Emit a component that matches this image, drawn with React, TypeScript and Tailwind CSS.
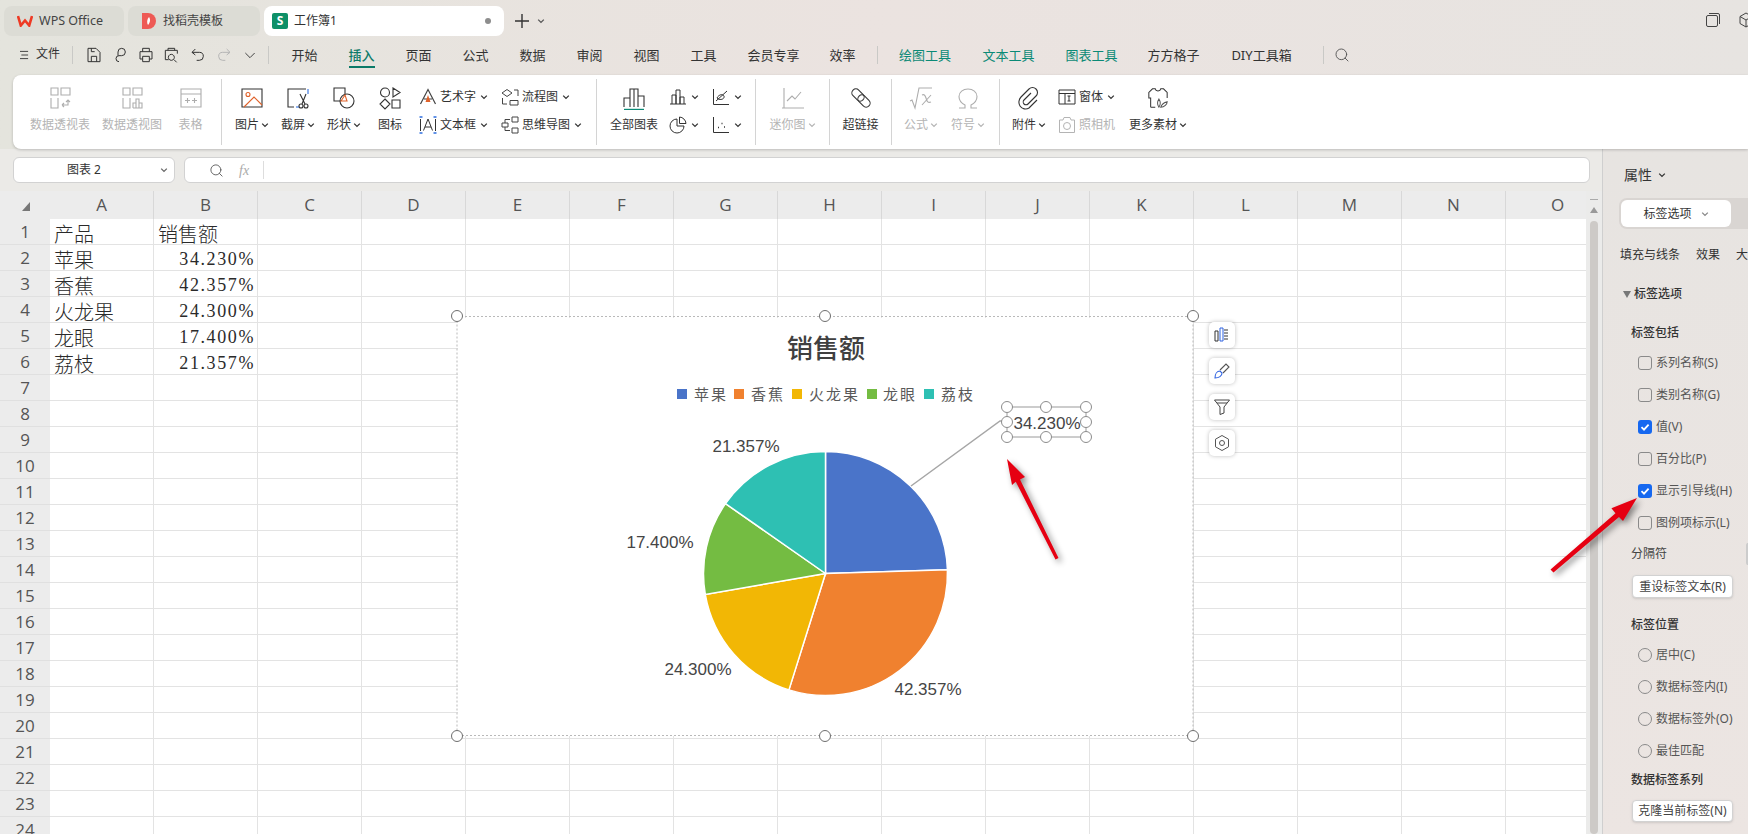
import type { ReactNode } from "react";
import { Search } from "lucide-react";

const COLUMNS = ["A", "B", "C", "D", "E", "F", "G", "H", "I", "J", "K", "L", "M", "N", "O"];
const ROWS = Array.from({ length: 24 }, (_, i) => i + 1);

const CELLS: Record<number, [string, string]> = {
  1: ["产品", "销售额"],
  2: ["苹果", "34.230%"],
  3: ["香蕉", "42.357%"],
  4: ["火龙果", "24.300%"],
  5: ["龙眼", "17.400%"],
  6: ["荔枝", "21.357%"],
};

const SLICES = [
  { value: 34.23, color: "#4a74c9" },
  { value: 42.357, color: "#f0812f" },
  { value: 24.3, color: "#f2b705" },
  { value: 17.4, color: "#74bc42" },
  { value: 21.357, color: "#2ec0b3" },
];

const LEGEND = [
  { x: 677, tx: 694, label: "苹果", color: "#4a74c9" },
  { x: 734, tx: 751, label: "香蕉", color: "#f0812f" },
  { x: 792, tx: 809, label: "火龙果", color: "#f2b705" },
  { x: 867, tx: 883, label: "龙眼", color: "#74bc42" },
  { x: 924, tx: 941, label: "荔枝", color: "#2ec0b3" },
];

const HANDLES = [
  [457, 316], [825, 316], [1193, 316],
  [457, 736], [825, 736], [1193, 736],
];

const LABEL_HANDLES = [
  [1007, 407], [1046, 407], [1086, 407],
  [1007, 422], [1086, 422],
  [1007, 437], [1046, 437], [1086, 437],
];

const MENU = [
  { label: "开始", w: "w-[57px]" },
  { label: "插入", w: "w-[57px]", active: true },
  { label: "页面", w: "w-[57px]" },
  { label: "公式", w: "w-[57px]" },
  { label: "数据", w: "w-[57px]" },
  { label: "审阅", w: "w-[57px]" },
  { label: "视图", w: "w-[57px]" },
  { label: "工具", w: "w-[57px]" },
  { label: "会员专享", w: "w-[83px]" },
  { label: "效率", w: "w-[55px]" },
];

const MENU_TOOLS = [
  { label: "绘图工具", w: "w-[84px]", teal: true },
  { label: "文本工具", w: "w-[83px]", teal: true },
  { label: "图表工具", w: "w-[83px]", teal: true },
  { label: "方方格子", w: "w-[81px]" },
  { label: "DIY工具箱", w: "w-[95px]" },
];

function slicePath(start: number, end: number) {
  const cx = 825.5;
  const cy = 573.5;
  const r = 122;
  const a0 = (start / 100) * Math.PI * 2;
  const a1 = (end / 100) * Math.PI * 2;
  const x0 = cx + r * Math.sin(a0);
  const y0 = cy - r * Math.cos(a0);
  const x1 = cx + r * Math.sin(a1);
  const y1 = cy - r * Math.cos(a1);
  const large = end - start > 50 ? 1 : 0;
  return `M${cx} ${cy}L${x0} ${y0}A${r} ${r} 0 ${large} 1 ${x1} ${y1}Z`;
}

function Icon({ children, color = "#333", size = "w-6 h-6" }: { children: ReactNode; color?: string; size?: string }) {
  return (
    <svg viewBox="0 0 24 24" className={`${size} shrink-0`} fill="none" stroke={color} strokeWidth={1.1}>
      {children}
    </svg>
  );
}

function Chev({ color = "#333" }: { color?: string }) {
  return (
    <svg viewBox="0 0 8 8" className="w-2 h-2 shrink-0" fill="none" stroke={color} strokeWidth={1.3}>
      <path d="M1.2 2.6 4 5.4 6.8 2.6" />
    </svg>
  );
}

function Big({ w, label, icon, chev, off }: { w: string; label: string; icon: ReactNode; chev?: boolean; off?: boolean }) {
  return (
    <div className={`${w} shrink-0 flex flex-col items-center pt-[11px] gap-[7px]`}>
      <div className="h-6 flex items-center justify-center">{icon}</div>
      <div className={`flex items-center gap-[2px] text-xs leading-4 whitespace-nowrap ${off ? "text-[#b4b4b4]" : "text-[#333]"}`}>
        {label}
        {chev && <Chev color={off ? "#b4b4b4" : "#333"} />}
      </div>
    </div>
  );
}

function Small({ label, icon, off, chev = true }: { label?: string; icon: ReactNode; off?: boolean; chev?: boolean }) {
  return (
    <div className={`flex items-center h-6 text-xs whitespace-nowrap ${off ? "text-[#b4b4b4]" : "text-[#333]"}`}>
      <div className="w-[18px] flex justify-center">{icon}</div>
      {label && <span className="ml-[3px]">{label}</span>}
      {chev && (
        <span className="ml-1">
          <Chev />
        </span>
      )}
    </div>
  );
}

function Stack({ w, children }: { w: string; children: ReactNode }) {
  return <div className={`${w} shrink-0 flex flex-col gap-1 pt-[10px]`}>{children}</div>;
}

function Sep() {
  return <div className="w-px h-[66px] mt-1 shrink-0 bg-[#d4d4d4]" />;
}

function Check({ label, checked }: { label: string; checked?: boolean }) {
  return (
    <div className="h-8 ml-[35px] flex items-center gap-1 text-xs text-[#555] whitespace-nowrap">
      {checked ? (
        <span className="w-[14px] h-[14px] rounded-[3px] bg-[#1668f0] flex items-center justify-center">
          <svg viewBox="0 0 12 12" className="w-3 h-3" fill="none" stroke="#fff" strokeWidth={1.8}>
            <path d="M2.5 6.2 5 8.6 9.6 3.6" />
          </svg>
        </span>
      ) : (
        <span className="w-[14px] h-[14px] rounded-[3px] border border-[#8a8a8a]" />
      )}
      {label}
    </div>
  );
}

function Radio({ label }: { label: string }) {
  return (
    <div className="h-8 ml-[35px] flex items-center gap-1 text-xs text-[#555] whitespace-nowrap">
      <span className="w-[14px] h-[14px] rounded-full border border-[#8a8a8a]" />
      {label}
    </div>
  );
}

function PanelButton({ label, h, mt }: { label: string; h: string; mt: string }) {
  return (
    <div className={`${h} ${mt} ml-[29px] w-[101px] rounded-[4px] bg-white border border-[#d2d2d2] shadow-sm flex items-center justify-center text-xs text-[#444] whitespace-nowrap`}>
      {label}
    </div>
  );
}

function SideButton({ children }: { children: ReactNode }) {
  return (
    <div className="w-[26px] h-[26px] rounded-[5px] bg-white shadow-[0_0_4px_rgba(0,0,0,0.25)] flex items-center justify-center">
      {children}
    </div>
  );
}

function Chart() {
  const total = SLICES.reduce((sum, s) => sum + s.value, 0);
  let acc = 0;
  return (
    <div className="absolute left-[458px] top-[318px] w-[735px] h-[418px] bg-white">
      <svg viewBox="458 318 735 418" className="absolute inset-0 w-full h-full overflow-visible">
        <rect x="457" y="316.5" width="736" height="419" fill="none" stroke="#b9b9b9" strokeDasharray="2 2" />
        <text x="826" y="358" textAnchor="middle" fontSize="26" fontWeight="500" fill="#404040">销售额</text>
        {LEGEND.map((l) => (
          <g key={l.label}>
            <rect x={l.x} y="389" width="10" height="10" fill={l.color} />
            <text x={l.tx} y="400" fontSize="15" letterSpacing="2" fill="#595959">{l.label}</text>
          </g>
        ))}
        {SLICES.map((s) => {
          const start = acc;
          acc += (s.value / total) * 100;
          return <path key={s.color} d={slicePath(start, acc)} fill={s.color} stroke="#fff" strokeWidth={1.5} />;
        })}
        <path d="M911 486 1000 421H1007" stroke="#a6a6a6" strokeWidth={1.5} fill="none" />
        <g fontFamily="'Liberation Sans', sans-serif" fontSize="17" fill="#454545" textAnchor="middle">
          <text x="746" y="452">21.357%</text>
          <text x="660" y="548">17.400%</text>
          <text x="698" y="675">24.300%</text>
          <text x="928" y="695">42.357%</text>
          <text x="1047" y="429">34.230%</text>
        </g>
        <rect x="1007" y="407" width="79" height="30" fill="none" stroke="#9a9a9a" />
        {LABEL_HANDLES.map(([x, y]) => (
          <circle key={`${x}-${y}`} cx={x} cy={y} r="5.5" fill="#fff" stroke="#8c8c8c" strokeWidth={1} />
        ))}
        {HANDLES.map(([x, y]) => (
          <circle key={`${x}-${y}`} cx={x} cy={y} r="5.5" fill="#fff" stroke="#6e6e6e" strokeWidth={1} />
        ))}
      </svg>
    </div>
  );
}

export default function App() {
  return (
    <div className="relative w-[1748px] h-[834px] overflow-hidden font-['Noto_Sans','Noto_Sans_CJK_SC',sans-serif] bg-linear-to-r from-[#e4e4dd] via-[#ebe3e0] to-[#e7e4e1] text-[#333]">
      {/* tab bar */}
      <div className="h-[42px] pt-[6px] pl-1 flex items-start gap-1">
        <div className="w-[120px] shrink-0 h-[30px] rounded-lg bg-[#dcdcd5] flex items-center pl-[13px] gap-[6px] text-[12.5px] text-[#444]">
          <svg viewBox="0 0 16 12" className="w-4 h-3">
            <path d="M1 1 3.800 10.500 8 5.500 12.200 10.500 15 1" fill="none" stroke="#ee3a24" strokeWidth={2.6} />
          </svg>
          WPS Office
        </div>
        <div className="w-[132px] shrink-0 h-[30px] rounded-lg bg-[#dcdcd5] flex items-center pl-[14px] gap-[7px] text-xs text-[#444]">
          <svg viewBox="0 0 14 16" className="w-[14px] h-4">
            <path d="M0 0H6A8 8 0 0 1 6 16H0Z" fill="#ee5a55" />
            <path d="M7 4C8.500 6 8.500 9 6 12 4.500 10 5 6 7 4Z" fill="#fff" />
          </svg>
          找稻壳模板
        </div>
        <div className="w-[240px] shrink-0 h-[30px] rounded-lg bg-white flex items-center pl-2 text-xs text-[#333]">
          <span className="w-4 h-4 rounded-[2px] bg-[#0e9068] flex items-center justify-center text-white text-xs font-bold">S</span>
          <span className="ml-[6px]">工作簿1</span>
          <span className="ml-auto mr-[13px] w-[6px] h-[6px] rounded-full bg-[#8d8d8d]" />
        </div>
        <svg viewBox="0 0 16 16" className="w-4 h-4 shrink-0 ml-[6px] mt-[7px]" fill="none" stroke="#333" strokeWidth={1.4}>
          <path d="M8 1V15M1 8H15" />
        </svg>
        <span className="shrink-0 mt-[11px] ml-[3px]">
          <Chev color="#555" />
        </span>
        <svg viewBox="0 0 16 16" className="w-4 h-4 shrink-0 ml-[1156px] mt-[6px]" fill="none" stroke="#444" strokeWidth={1}>
          <rect x="1.5" y="3.5" width="11" height="11" rx="1.5" />
          <path d="M4 1.5H13A1.5 1.5 0 0 1 14.5 3V12" />
        </svg>
        <svg viewBox="0 0 16 16" className="w-4 h-4 shrink-0 ml-[13px] mt-[6px]" fill="none" stroke="#444" strokeWidth={1}>
          <path d="M8 1 14 4.500V11.500L8 15 2 11.500V4.500ZM2 4.500 8 8 14 4.500M8 8V15" />
        </svg>
      </div>

      {/* menu row */}
      <div className="h-[33px] flex items-start pt-[3px] text-[13px] leading-5 text-[#333] whitespace-nowrap">
        <svg viewBox="0 0 10 10" className="ml-5 mt-[5px] w-[9px] h-[10px]" fill="none" stroke="#333" strokeWidth={1}>
          <path d="M0 1H9M1.500 5H9M0 9H9" />
        </svg>
        <span className="ml-[7px] mt-[1px] text-xs">文件</span>
        <div className="ml-3 mt-[1px] w-px h-[18px] bg-[#c9c9c6]" />
        <div className="ml-[13px] flex items-center gap-[10px] h-5">
          <Icon size="w-4 h-4">
            <path d="M3 2H15L21 8V22H3ZM8 22V14H16V22M8 2V7H13" strokeWidth={1.5} />
          </Icon>
          <Icon size="w-4 h-4">
            <path d="M9 13V7.500A5.500 5.500 0 1 1 14.500 13H10.500A4.500 4.500 0 1 0 10.500 22" strokeWidth={1.5} />
          </Icon>
          <Icon size="w-4 h-4">
            <path d="M7 7V2H17V7M7 18H3V7H21V18H17M7 14H17V22H7Z" strokeWidth={1.5} />
          </Icon>
          <Icon size="w-4 h-4">
            <path d="M6 5V2H16V5M7 19H2V5H20V10M11 11A4.500 4.500 0 1 0 11.010 11M15 19 19 23" strokeWidth={1.5} />
          </Icon>
          <Icon size="w-4 h-4">
            <path d="M8 3 3 8 8 12M3 8H14A6 6 0 0 1 14 20H10" strokeWidth={1.5} />
          </Icon>
          <Icon size="w-4 h-4" color="#b5b5b5">
            <path d="M16 3 21 8 16 12M21 8H10A6 6 0 0 0 10 20H14" strokeWidth={1.5} />
          </Icon>
          <Icon size="w-4 h-4" color="#444">
            <path d="M5 9 12 16 19 9" strokeWidth={1.5} />
          </Icon>
        </div>
        <div className="ml-[10px] mt-[1px] w-px h-[18px] bg-[#c9c9c6]" />
        <div className="ml-[7px] flex">
          {MENU.map((m) => (
            <div key={m.label} className={`${m.w} flex justify-center`}>
              <span className={m.active ? "text-[#0b7a68] font-medium border-b-2 border-[#0b7a68] pb-[1px] h-[23px]" : ""}>{m.label}</span>
            </div>
          ))}
        </div>
        <div className="ml-[7px] mt-[1px] w-px h-[18px] bg-[#c9c9c6]" />
        <div className="ml-[5px] flex">
          {MENU_TOOLS.map((m) => (
            <div key={m.label} className={`${m.w} flex justify-center ${m.teal ? "text-[#0b8a76]" : ""}`}>
              {m.label}
            </div>
          ))}
        </div>
        <div className="ml-[14px] mt-[1px] w-px h-[18px] bg-[#c9c9c6]" />
        <Search className="ml-[10px] mt-[2px] w-4 h-4 text-[#555]" strokeWidth={1.4} />
      </div>

      {/* ribbon */}
      <div className="relative z-10 ml-[13px] h-[74px] rounded-l-lg bg-white shadow-[0_1px_3px_rgba(0,0,0,0.2)] flex pl-[11px]">
        <Big w="w-[72px]" label="数据透视表" off icon={<Icon color="#adadad"><path d="M3 2H10V9H3ZM13 2H22V9H13ZM3 12V22H10V12M14 19H20V14M18 16 20 14 22 16M14 19 16 17M14 19 16 21" /></Icon>} />
        <Big w="w-[72px]" label="数据透视图" off icon={<Icon color="#adadad"><path d="M3 2H10V9H3ZM13 2H22V9H13ZM3 12V22H10V12M13 22V17H16V22M16 22V13H19V22M19 22V17H22V22H13" /></Icon>} />
        <Big w="w-[45px]" label="表格" off icon={<Icon color="#adadad"><path d="M2 3H22V21H2ZM2 8H22M6 14.500H11M8.500 12V17M13 14.500H18M15.500 12V17" /></Icon>} />
        <div className="w-2 shrink-0" />
        <Sep />
        <div className="w-[7px] shrink-0" />
        <Big w="w-[46px]" label="图片" chev icon={<Icon><path d="M2 3H22V21H2Z" /><circle cx="8" cy="8.500" r="2" stroke="#e0622a" /><path d="M4 21 14 11 22 19" stroke="#e0622a" /></Icon>} />
        <Big w="w-[46px]" label="截屏" chev icon={<Icon><path d="M20 3H2V21H8" /><path d="M10 21H13" stroke="#2f6fe0" /><path d="M22 3V8" stroke="#2f6fe0" /><circle cx="15" cy="20" r="2" /><circle cx="20" cy="20" r="2" /><path d="M16 18 20 8M19 18 14 8" /></Icon>} />
        <Big w="w-[46px]" label="形状" chev icon={<Icon><path d="M13 9V2H2V15H9" /><circle cx="15" cy="15" r="7" /><path d="M9 15 13 9 15 15Z" stroke="#e0622a" /></Icon>} />
        <Big w="w-[46px]" label="图标" icon={<Icon><circle cx="7" cy="6.500" r="4.500" /><path d="M15 2 22 6.500 15 11ZM7 13 12 18 7 23 2 18ZM14 14H22V22H14Z" /></Icon>} />
        <div className="w-[6px] shrink-0" />
        <Stack w="w-[82px]">
          <Small label="艺术字" icon={<svg viewBox="0 0 18 18" className="w-[18px] h-[18px]" fill="none" stroke="#444" strokeWidth={1.2}><path d="M1.500 16 9 1.500 16.500 16M5 11H13" /><path d="M9 7 11.500 14H6.500Z" fill="#e0622a" stroke="none" /></svg>} />
          <Small label="文本框" icon={<svg viewBox="0 0 18 18" className="w-[18px] h-[18px]" fill="none" stroke="#333" strokeWidth={1}><path d="M1.500 3V15M16.500 3V15M4.500 14.500 9 3 13.500 14.500M6 11H12" /><path d="M0.500 1H3.500M14.500 1H17.500M0.500 17H3.500M14.500 17H17.500" stroke="#2f6fe0" strokeWidth={1.4} /></svg>} />
        </Stack>
        <Stack w="w-[95px]">
          <Small label="流程图" icon={<svg viewBox="0 0 18 18" className="w-[18px] h-[18px]" fill="none" stroke="#444" strokeWidth={1}><path d="M1 5 6 1.500 11 5 6 8.500ZM13 2H17V8M1.500 10V16H6M9 12.500H17V17H9Z" /></svg>} />
          <Small label="思维导图" icon={<svg viewBox="0 0 18 18" className="w-[18px] h-[18px]" fill="none" stroke="#444" strokeWidth={1}><path d="M1 7H7V11H1ZM11 1H17V6H11ZM11 12H17V17H11ZM4 7V3.500H9M4 11V14.500H9" /></svg>} />
        </Stack>
        <Sep />
        <div className="w-[2px] shrink-0" />
        <Big w="w-[70px]" label="全部图表" icon={<Icon><path d="M2 21V12H8M8 21V3H16V21M12 3V21M16 10H22V21" /><path d="M2 23.500H22" stroke="#0b8a76" strokeWidth={1.4} /></Icon>} />
        <Stack w="w-[43px]">
          <Small icon={<svg viewBox="0 0 18 18" className="w-[18px] h-[18px]" fill="none" stroke="#333" strokeWidth={1}><path d="M1 16H17M3 16V7H7V16M7 16V2H11V16M11 16V9H15V16" /></svg>} />
          <Small icon={<svg viewBox="0 0 18 18" className="w-[18px] h-[18px]" fill="none" stroke="#333" strokeWidth={1}><path d="M8 3A7 7 0 1 0 15 10H8ZM10.500 1A7 7 0 0 1 17 7.500H10.500Z" /></svg>} />
        </Stack>
        <Stack w="w-[43px]">
          <Small icon={<svg viewBox="0 0 18 18" className="w-[18px] h-[18px]" fill="none" stroke="#333" strokeWidth={1}><path d="M1.500 1V16.500H17M4 13 15 3M5 10C7 6 11 6 12 8 13 11 8 13 5 10Z" /></svg>} />
          <Small icon={<svg viewBox="0 0 18 18" className="w-[18px] h-[18px]" fill="none" stroke="#333" strokeWidth={1}><path d="M1.500 1V16.500H17" /><path d="M6 11.500H7M9.500 7.500H10.500M12 11H13" strokeWidth={1.6} /></svg>} />
        </Stack>
        <Sep />
        <Big w="w-[73px]" label="迷你图" chev off icon={<Icon color="#adadad"><path d="M3 2V22H23M1 22H3M6 15 11 10 14 13 20 6" /></Icon>} />
        <Sep />
        <Big w="w-[61px]" label="超链接" icon={<Icon><rect x="5" y="2" width="8" height="14" rx="4" transform="rotate(-45 9 9)" /><rect x="11" y="8" width="8" height="14" rx="4" transform="rotate(-45 15 15)" /></Icon>} />
        <Sep />
        <Big w="w-[58px]" label="公式" chev off icon={<Icon color="#adadad"><path d="M1 15 3 14 6 22 10 2H23M13 9C15 8 16 9 17 12 18 16 19 17 22 16M22 9 13 19" /></Icon>} />
        <Big w="w-[36px]" label="符号" chev off icon={<Icon color="#adadad"><path d="M3 22H9V19C5 17 3 14 3 10.500 3 6 7 3 12 3 17 3 21 6 21 10.500 21 14 19 17 15 19V22H21" /></Icon>} />
        <div className="w-[13px] shrink-0" />
        <Sep />
        <Big w="w-[58px]" label="附件" chev icon={<Icon><path d="M20 14 12 22C9 24 5 23 3 20 1 17 2 13 4 11L12 3C14 1 17 1 19 3 21 5 21 8 19 10L11 18C10 19 8 19 7 18 6 17 6 15 7 14L14 7" /></Icon>} />
        <Stack w="w-[72px]">
          <Small label="窗体" icon={<svg viewBox="0 0 18 18" className="w-[18px] h-[18px]" fill="none" stroke="#333" strokeWidth={1}><path d="M1 2H17V16H1ZM1 5.500H17M7 5.500V16M11 8V13M9.500 8H12.500M9.500 13H12.500" /></svg>} />
          <Small label="照相机" off chev={false} icon={<svg viewBox="0 0 18 18" className="w-[18px] h-[18px]" fill="none" stroke="#b4b4b4" strokeWidth={1}><path d="M1.500 4H5L6 1.500H12L13 4H16.500V16.500H1.500Z" /><circle cx="9" cy="10" r="3.500" /></svg>} />
        </Stack>
        <Big w="w-[56px]" label="更多素材" chev icon={<Icon size="w-[22px] h-[22px]"><path d="M4 22V12H2V6L6 2H9C9.500 5 14.500 5 15 2H18L22 6V12M9 22H4" /><path d="M13 22C11 19 11 16 13 13 15 16 15 19 13 22ZM15 22C16 19 18 17 22 16 22 19 19 22 15 22Z" stroke="#555" /></Icon>} />
      </div>

      {/* work area */}
      <div className="h-[685px] flex">
        <div className="w-[1603px] shrink-0 flex flex-col border-r border-[#cfcfcf]">
          <div className="h-[42px] flex items-start pt-2 pl-[13px] bg-[#ebeae7]">
            <div className="relative w-[162px] h-[26px] rounded-md bg-white border border-[#d2d2d2] flex items-center justify-center text-xs">
              <span className="mr-[20px]">图表 2</span>
              <span className="absolute right-[6px]">
                <Chev color="#666" />
              </span>
            </div>
            <div className="ml-[9px] w-[1406px] h-[26px] rounded-md bg-white border border-[#d2d2d2] flex items-center pl-[24px]">
              <Search className="w-[15px] h-[15px] text-[#555]" strokeWidth={1.4} />
              <span className="ml-[15px] font-['Liberation_Serif',serif] italic text-[14px] text-[#aaa]">fx</span>
              <div className="ml-[14px] w-px h-[18px] bg-[#ddd]" />
            </div>
          </div>

          <div className="flex-1 flex overflow-hidden">
            <div className="w-[1586px] shrink-0 overflow-hidden bg-white">
              <div className="h-[28px] flex bg-[#ececec]">
                <div className="relative w-[50px] shrink-0">
                  <svg viewBox="0 0 8 9" className="absolute left-[22px] top-[11px] w-2 h-[9px]">
                    <path d="M8 0V9H0Z" fill="#777" />
                  </svg>
                </div>
                {COLUMNS.map((c) => (
                  <div key={c} className="w-[104px] shrink-0 flex items-center justify-center border-r border-[#d8d8d8] text-[17px] leading-5 text-[#555] font-['Open_Sans',sans-serif]">
                    {c}
                  </div>
                ))}
              </div>
              {ROWS.map((r) => (
                <div key={r} className="h-[26px] flex">
                  <div className="w-[50px] shrink-0 bg-[#ececec] border-b border-[#e0e0e0] flex items-center justify-center text-[17px] leading-5 text-[#555] font-['Open_Sans',sans-serif]">
                    {r}
                  </div>
                  {COLUMNS.map((c, i) => (
                    <div key={c} className="w-[104px] shrink-0 border-r border-b border-[#e3e3e3] text-[#2a2a2a]">
                      {i === 0 && CELLS[r] && <div className="pl-1 pt-[6px] text-[20px] leading-[19px] font-light">{CELLS[r][0]}</div>}
                      {i === 1 && CELLS[r] && r === 1 && <div className="pl-1 pt-[6px] text-[20px] leading-[19px] font-light">{CELLS[r][1]}</div>}
                      {i === 1 && CELLS[r] && r > 1 && (
                        <div className="pr-[2px] pt-1 text-right text-[18px] leading-[21px] tracking-[1.6px] font-['Liberation_Serif',serif]">{CELLS[r][1]}</div>
                      )}
                    </div>
                  ))}
                </div>
              ))}
            </div>
            <div className="flex-1 bg-[#ebebea] flex flex-col items-center pt-[8px]">
              <div className="w-2 h-px bg-[#aaa]" />
              <svg viewBox="0 0 8 6" className="w-2 h-[6px] mt-[7px]">
                <path d="M4 0 8 6H0Z" fill="#999" />
              </svg>
              <div className="mt-2 w-2 flex-1 rounded-full bg-[#cdcac7]" />
            </div>
          </div>
        </div>

        {/* properties panel */}
        <div className="flex-1 overflow-hidden bg-linear-to-b from-[#e7e4e1] to-[#ece5e2] whitespace-nowrap">
          <div className="h-[49px] pt-4 pl-[21px] flex items-start gap-[6px] text-sm leading-5">
            属性
            <span className="mt-[6px]">
              <Chev />
            </span>
          </div>
          <div className="ml-4 h-[31px] w-[140px] rounded-l-lg bg-[#d9d5d2] p-[2px]">
            <div className="w-[110px] h-[27px] rounded-md bg-white flex items-center justify-center gap-[9px] text-xs text-[#333]">
              标签选项
              <Chev color="#888" />
            </div>
          </div>
          <div className="mt-4 h-5 ml-[17px] flex gap-4 text-xs leading-5">
            <span>填充与线条</span>
            <span>效果</span>
            <span>大小</span>
          </div>
          <div className="mt-[19px] h-5 ml-[20px] flex items-center gap-[3px] text-xs font-medium">
            <svg viewBox="0 0 8 7" className="w-2 h-[7px]">
              <path d="M0 0H8L4 7Z" fill="#777" />
            </svg>
            标签选项
          </div>
          <div className="mt-[19px] h-5 ml-[28px] text-xs leading-5 font-medium">标签包括</div>
          <div className="mt-1">
            <Check label="系列名称(S)" />
            <Check label="类别名称(G)" />
            <Check label="值(V)" checked />
            <Check label="百分比(P)" />
            <Check label="显示引导线(H)" checked />
            <Check label="图例项标示(L)" />
          </div>
          <div className="mt-[5px] h-5 ml-[28px] flex items-center text-xs text-[#444]">
            分隔符
            <span className="ml-[79px] w-4 h-[22px] rounded-l-sm border border-[#ccc] bg-white" />
          </div>
          <PanelButton label="重设标签文本(R)" h="h-[23px]" mt="mt-[11px]" />
          <div className="mt-[17px] h-5 ml-[28px] text-xs leading-5 font-medium">标签位置</div>
          <div className="mt-1">
            <Radio label="居中(C)" />
            <Radio label="数据标签内(I)" />
            <Radio label="数据标签外(O)" />
            <Radio label="最佳匹配" />
          </div>
          <div className="mt-[3px] h-5 ml-[28px] text-xs leading-5 font-medium">数据标签系列</div>
          <PanelButton label="克隆当前标签(N)" h="h-[22px]" mt="mt-[10px]" />
        </div>
      </div>

      <Chart />

      {/* chart side buttons */}
      <div className="absolute left-[1209px] top-[322px] flex flex-col gap-[10px]">
        <SideButton>
          <svg viewBox="0 0 18 18" className="w-[18px] h-[18px]" fill="none" strokeWidth={1}>
            <path d="M2 5H5V15H2ZM11 4H15M11 7H15M11 10H15M11 13H15" stroke="#333" />
            <path d="M7 2H10V15H7Z" stroke="#2f62e0" />
          </svg>
        </SideButton>
        <SideButton>
          <svg viewBox="0 0 18 18" className="w-[18px] h-[18px]" fill="none" strokeWidth={1.1}>
            <path d="M2 16C2 12 4 9 7 9L9 11C9 14 6 16 2 16Z" stroke="#2f62e0" />
            <path d="M7 8 13 2 16 5 10 11" stroke="#555" />
          </svg>
        </SideButton>
        <SideButton>
          <svg viewBox="0 0 18 18" className="w-[18px] h-[18px]" fill="none" stroke="#444" strokeWidth={1}>
            <path d="M1.500 2H16.500L11 9V15L7 16.500V9ZM4 5H14" />
          </svg>
        </SideButton>
        <SideButton>
          <svg viewBox="0 0 18 18" className="w-[18px] h-[18px]" fill="none" stroke="#555" strokeWidth={1}>
            <path d="M9 1.500 15.500 5.200V12.800L9 16.500 2.500 12.800V5.200Z" />
            <circle cx="9" cy="9" r="2.500" />
          </svg>
        </SideButton>
      </div>

      {/* red annotation arrows */}
      <svg viewBox="0 0 1748 834" className="absolute inset-0 w-[1748px] h-[834px] pointer-events-none drop-shadow-[3px_3px_3px_rgba(0,0,0,0.45)]">
        <polygon points="1007,459 1025,477 1020,479.500 1058.500,558 1055.500,559.500 1015.800,481.800 1012,485" fill="#e60012" />
        <polygon points="1637,498 1623,521 1619,517 1553.500,572.500 1550.500,569.500 1615.500,513.200 1611.400,508.200" fill="#e60012" />
      </svg>
    </div>
  );
}
